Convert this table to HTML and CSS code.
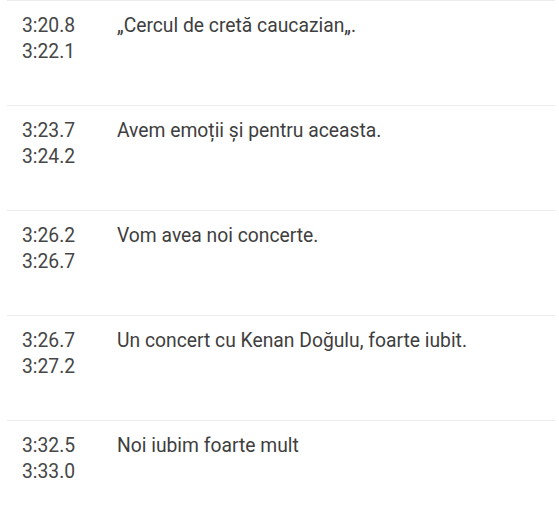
FILE: index.html
```html
<!DOCTYPE html>
<html lang="ro">
<head>
<meta charset="utf-8">
<link rel="stylesheet" href="styles.css">
</head>
<body>
<div class="list">
  <div class="row">
    <div class="times"><div>3:20.8</div><div>3:22.1</div></div>
    <div class="text">„Cercul de cretă caucazian„.</div>
  </div>
  <div class="row">
    <div class="times"><div>3:23.7</div><div>3:24.2</div></div>
    <div class="text">Avem emoții și pentru aceasta.</div>
  </div>
  <div class="row">
    <div class="times"><div>3:26.2</div><div>3:26.7</div></div>
    <div class="text">Vom avea noi concerte.</div>
  </div>
  <div class="row">
    <div class="times"><div>3:26.7</div><div>3:27.2</div></div>
    <div class="text">Un concert cu Kenan Doğulu, foarte iubit.</div>
  </div>
  <div class="row">
    <div class="times"><div>3:32.5</div><div>3:33.0</div></div>
    <div class="text">Noi iubim foarte mult</div>
  </div>
</div>
</body>
</html>
```
FILE: styles.css
```css
html, body {
  margin: 0;
  padding: 0;
  background: #fff;
}
body {
  font-family: Roboto, "Liberation Sans", sans-serif;
  font-size: 19.3px;
  line-height: 26px;
  color: #3e3e3e;
}
.list {
  margin-left: 7px;
  width: 548px;
}
.row {
  display: flex;
  border-top: 1px solid #ececec;
  padding: 12px 0 0 15px;
  height: 92px;
}
.times {
  width: 95px;
  flex: none;
  color: #464646;
}
.text {
  flex: 1;
}
```
